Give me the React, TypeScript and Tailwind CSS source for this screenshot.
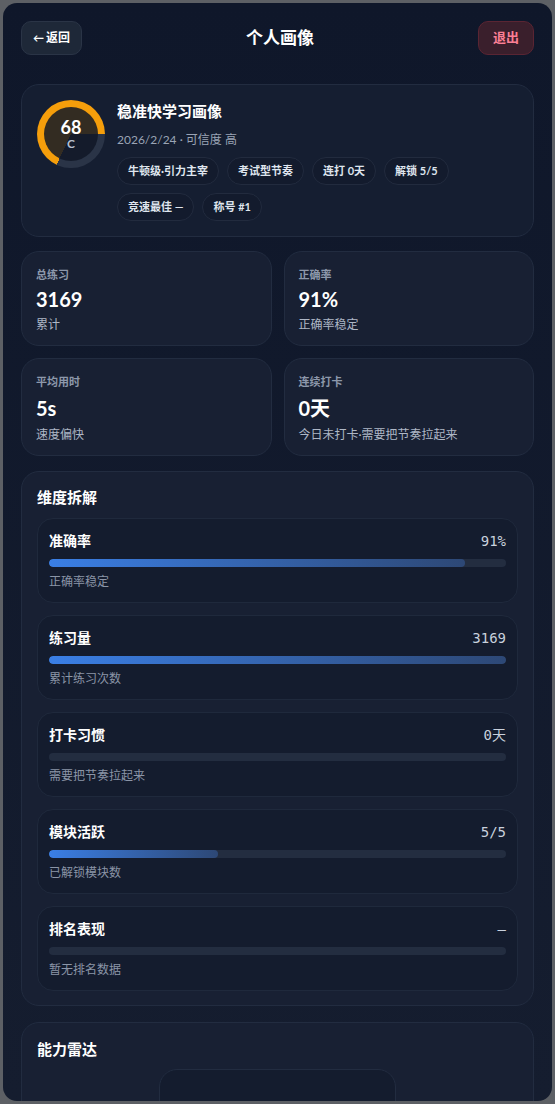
import React from 'react';

const latin = "font-['Lato','Noto_Sans_CJK_SC',sans-serif]";
const mono = "font-['DejaVu_Sans_Mono','Noto_Sans_CJK_SC',monospace]";

const pills = ['牛顿级·引力主宰', '考试型节奏', '连打 0天', '解锁 5/5', '竞速最佳 —', '称号 #1'];

const stats = [
  { label: '总练习', value: '3169', sub: '累计', tall: false },
  { label: '正确率', value: '91%', sub: '正确率稳定', tall: false },
  { label: '平均用时', value: '5s', sub: '速度偏快', tall: true },
  { label: '连续打卡', value: '0天', sub: '今日未打卡·需要把节奏拉起来', tall: true },
];

const dims = [
  { name: '准确率', value: '91%', pct: 91, sub: '正确率稳定' },
  { name: '练习量', value: '3169', pct: 100, sub: '累计练习次数' },
  { name: '打卡习惯', value: '0天', pct: 0, sub: '需要把节奏拉起来' },
  { name: '模块活跃', value: '5/5', pct: 37, sub: '已解锁模块数' },
  { name: '排名表现', value: '—', pct: 0, sub: '暂无排名数据' },
];

const ScoreRing: React.FC = () => (
  <div className="w-[68px] h-[68px] shrink-0 rounded-full p-[7px] bg-[conic-gradient(from_90deg,#2a3447_0_32%,#f59e0b_32%_100%)]">
    <div className="w-full h-full rounded-full bg-[#111827]/85 flex flex-col items-center justify-center">
      <span className={`${latin} text-[18px] font-bold leading-[19px] text-white`}>68</span>
      <span className={`${latin} text-[12px] font-bold leading-[14px] text-[#b7c0cf]`}>C</span>
    </div>
  </div>
);

export default function App() {
  return (
    <div className="h-[1104px] bg-[#5d6065] p-[3px]">
      <div className={`${latin} h-full overflow-hidden rounded-[14px] bg-gradient-to-b from-[#0f172a] to-[#151d2f] px-[18px] pt-[18px]`}>
        {/* header */}
        <div className="flex items-center justify-between">
          <button className="h-[34px] px-[11px] rounded-[10px] bg-[#1e2838] border border-[#2a3446] text-[12px] font-bold text-white flex items-center gap-[2px]">
            <span className="text-[11px]">←</span>返回
          </button>
          <h1 className="text-[17px] font-bold text-white">个人画像</h1>
          <button className="h-[34px] px-[14px] rounded-[10px] bg-[#3a1f2c] border border-[#5a2533] text-[13px] font-bold text-[#fb7f95]">
            退出
          </button>
        </div>

        {/* profile */}
        <div className="mt-[29px] rounded-[18px] border border-[#222c40] bg-[#151e31] p-[15px] flex gap-[12px]">
          <ScoreRing />
          <div className="flex-1 min-w-0">
            <div className="text-[15px] font-bold leading-[22px] text-white">稳准快学习画像</div>
            <div className="mt-[9px] text-[12px] leading-[18px] text-[#9aa4b5]">2026/2/24 · 可信度 高</div>
            <div className="mt-[8px] flex flex-wrap gap-[8px]">
              {pills.map((p) => (
                <span
                  key={p}
                  className="h-[28px] px-[10px] rounded-full border border-[#222b3e] bg-[#131b2d] text-[11px] font-bold text-[#dfe5ee] flex items-center"
                >
                  {p}
                </span>
              ))}
            </div>
          </div>
        </div>

        {/* stats */}
        <div className="mt-[14px] grid grid-cols-2 gap-[12px]">
          {stats.map((s) => (
            <div
              key={s.label}
              className={`rounded-[18px] border border-[#222c40] bg-[#182033] px-[14px] pb-[11px] ${s.tall ? 'pt-[15px]' : 'pt-[15px]'}`}
            >
              <div className="text-[11px] font-bold leading-[16px] text-[#8d98ab]">{s.label}</div>
              <div className={`text-[20px] font-bold text-white ${s.tall ? 'mt-[3px] leading-[30px]' : 'mt-[2px] leading-[28px]'}`}>
                {s.value}
              </div>
              <div className="mt-[3px] text-[12px] leading-[18px] text-[#aeb7c6]">{s.sub}</div>
            </div>
          ))}
        </div>

        {/* dimensions */}
        <div className="mt-[15px] rounded-[18px] border border-[#222c40] bg-[#182033] px-[15px] pt-[14px] pb-[14px]">
          <div className="text-[15px] font-bold leading-[22px] text-white">维度拆解</div>
          <div className="mt-[10px] flex flex-col gap-[12px]">
            {dims.map((d) => (
              <div key={d.name} className="rounded-[16px] border border-[#1f293c] bg-[#141c2e] px-[11px] pt-[12px] pb-[11px]">
                <div className="flex items-center justify-between">
                  <span className="text-[14px] font-bold leading-[20px] text-white">{d.name}</span>
                  <span className={`${mono} text-[14px] leading-[20px] text-[#c9d1dd]`}>{d.value}</span>
                </div>
                <div className="mt-[8px] h-[8px] rounded-full bg-[#232d40] overflow-hidden">
                  <div
                    className="h-full rounded-full bg-gradient-to-r from-[#3a7fe6] to-[#2d4876]"
                    style={{ width: `${d.pct}%` }}
                  />
                </div>
                <div className="mt-[6px] text-[12px] leading-[18px] text-[#8b95a7]">{d.sub}</div>
              </div>
            ))}
          </div>
        </div>

        {/* radar */}
        <div className="mt-[16px] rounded-[18px] border border-[#222c40] bg-[#182033] px-[15px] pt-[15px] pb-[14px]">
          <div className="text-[15px] font-bold leading-[22px] text-white">能力雷达</div>
          <div className="mt-[9px] mx-auto w-[237px] h-[240px] rounded-[18px] border border-[#222c40] bg-[#141c2e]" />
        </div>
      </div>
    </div>
  );
}
